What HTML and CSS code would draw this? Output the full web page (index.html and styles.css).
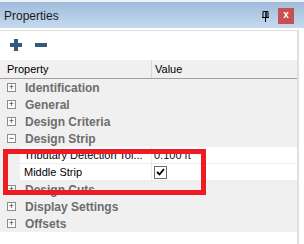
FILE: index.html
```html
<!DOCTYPE html>
<html lang="en">
<head>
    <meta charset="UTF-8">
    <title>Properties</title>
    <link rel="stylesheet" href="styles.css">
</head>
<body>
    <div class="window">
        <div class="titlebar">
            <span class="title">Properties</span>
            <svg class="pin" width="9" height="11" viewBox="0 0 9 11">
                <path d="M2 0.5h5v6h-5z M1 6.5h7 M4.5 6.5v4.5" fill="none" stroke="#000" stroke-width="1"/>
                <path d="M5 1v5.5" stroke="#000" stroke-width="1.5"/>
            </svg>
            <div class="close">x</div>
        </div>

        <div class="panel">
            <div class="toolbar">
                <svg width="12" height="12" viewBox="0 0 12 12">
                    <path d="M4 0h4v4h4v4h-4v4h-4v-4h-4v-4h4z" fill="#35597a"/>
                </svg>
                <svg width="12" height="12" viewBox="0 0 12 12">
                    <path d="M0 4h12v4h-12z" fill="#35597a"/>
                </svg>
            </div>

            <div class="grid">
                <div class="header">
                    <div class="col-name">Property</div>
                    <div class="col-value">Value</div>
                </div>

                <div class="category"><span class="toggle">+</span>Identification</div>
                <div class="category"><span class="toggle">+</span>General</div>
                <div class="category"><span class="toggle">+</span>Design Criteria</div>
                <div class="category"><span class="toggle">&minus;</span>Design Strip</div>

                <div class="item">
                    <div class="col-name">Tributary Detection Tol...</div>
                    <div class="col-value">0.100 ft</div>
                </div>
                <div class="item">
                    <div class="col-name">Middle Strip</div>
                    <div class="col-value">
                        <span class="check">
                            <svg width="9" height="8" viewBox="0 0 9 8">
                                <path d="M1 4l2.5 2.5l4.5-5.5" fill="none" stroke="#000" stroke-width="1.8"/>
                            </svg>
                        </span>
                    </div>
                </div>

                <div class="category"><span class="toggle">+</span>Design Cuts</div>
                <div class="category"><span class="toggle">+</span>Display Settings</div>
                <div class="category"><span class="toggle">+</span>Offsets</div>
            </div>
        </div>

        <div class="highlight"></div>
    </div>
</body>
</html>
```

FILE: styles.css
```css
* {
    margin: 0;
    padding: 0;
    box-sizing: border-box;
}

body {
    width: 304px;
    height: 244px;
    overflow: hidden;
    background: #fff;
    font-family: "Liberation Sans", Arial, sans-serif;
    font-size: 11px;
    color: #000;
}

.window {
    position: relative;
    height: 244px;
}

/* title bar */
.titlebar {
    height: 28px;
    display: flex;
    align-items: center;
    padding: 2px 10px 0 4px;
    border-top: 2px solid #eef2f6;
    background: linear-gradient(#9fbcdb, #c6daef);
}

.title {
    flex: 1;
    font-size: 12px;
    color: #1b1b1b;
}

.pin {
    margin-right: 8px;
}

.close {
    width: 16px;
    height: 16px;
    background: #c75050;
    color: #fff;
    font-weight: bold;
    font-size: 10px;
    line-height: 14px;
    text-align: center;
}

/* panel */
.panel {
    margin-top: 2px;
    width: 299px;
    border-top: 1px solid #dedede;
    border-right: 2px solid #e0e0e0;
    height: 214px;
}

.toolbar {
    height: 29px;
    display: flex;
    align-items: center;
    gap: 13px;
    padding: 0 0 2px 10px;
}

.grid {
    background: #fff;
}

.header {
    display: flex;
    height: 19px;
    background: #f0f0f0;
    border-bottom: 1px solid #a0a0a0;
    align-items: center;
}

.header .col-name {
    width: 152px;
    padding-left: 7px;
    border-right: 1px solid #d8d8d8;
    height: 100%;
    line-height: 18px;
}

.header .col-value {
    padding-left: 3px;
}

.category {
    height: 17px;
    display: flex;
    align-items: center;
    background: #f0f0f0;
    color: #6d6d6d;
    font-weight: bold;
    font-size: 12px;
}

.toggle {
    width: 9px;
    height: 9px;
    margin: 0 9px 0 7px;
    border: 1px solid #8c8c8c;
    background: #fff;
    color: #333;
    font-weight: normal;
    font-size: 9px;
    line-height: 7px;
    text-align: center;
}

.item {
    height: 17px;
    display: flex;
    background: #fff;
    padding-left: 20px;
    box-shadow: inset 20px 0 0 #f0f0f0;
}

.item .col-name,
.item .col-value {
    border-bottom: 1px solid #ececec;
    line-height: 16px;
}

.item .col-name {
    width: 132px;
    padding-left: 4px;
    border-right: 1px solid #ececec;
    white-space: nowrap;
    overflow: hidden;
}

.item .col-value {
    flex: 1;
    padding-left: 2px;
    display: flex;
    align-items: center;
    color: #111;
}

.check {
    width: 13px;
    height: 13px;
    border: 1px solid #6b6b6b;
    display: flex;
    align-items: center;
    justify-content: center;
}

/* red annotation box over the rows */
.highlight {
    position: absolute;
    left: 3px;
    top: 149px;
    width: 203px;
    height: 46px;
    border: 5px solid #ed1c24;
}
```
